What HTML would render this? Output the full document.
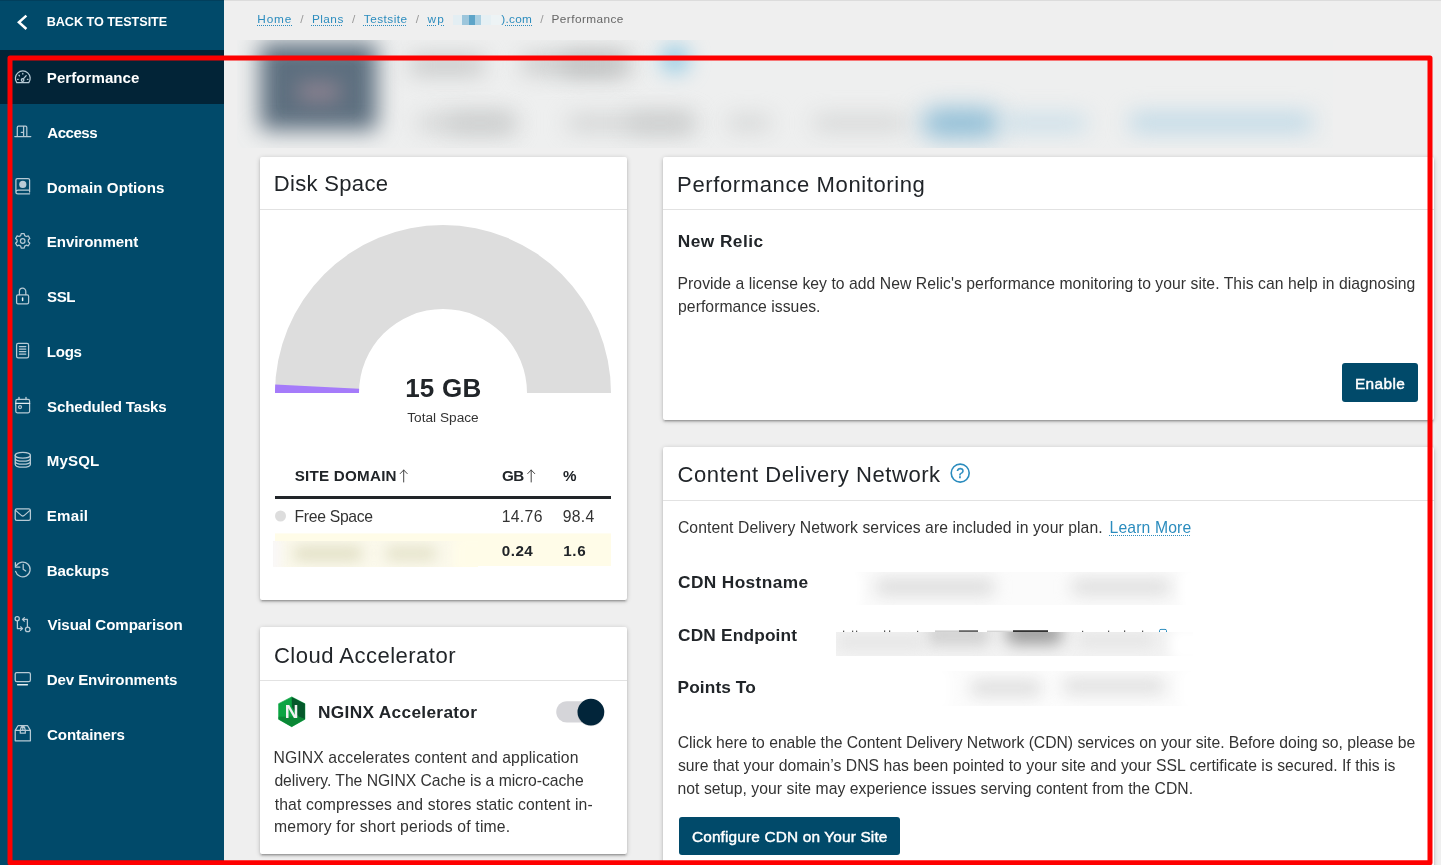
<!DOCTYPE html>
<html lang="en"><head><meta charset="utf-8"><title>Performance</title>
<style>
*{box-sizing:border-box}
html,body{margin:0;padding:0}
body{width:1441px;height:865px;overflow:hidden;position:relative;background:#efefef;font-family:"Liberation Sans",sans-serif}
.abs{position:absolute}
#main-top{position:absolute;left:224px;top:0;width:1217px;height:1px;background:#dcdcdc}
#sidebar{position:absolute;left:0;top:0;width:224px;height:865px;background:#014a6a}
#sidebar .topline{position:absolute;left:0;top:0;width:224px;height:1px;background:#023f5c}
#sidebar .active{position:absolute;left:0;top:50px;width:224px;height:54px;background:#022437}
.ico{position:absolute;left:0;top:0;width:224px;height:865px;overflow:visible}
.card{position:absolute;background:#fff;border-radius:2px;box-shadow:0 2px 2px 0 rgba(0,0,0,.14),0 3px 1px -2px rgba(0,0,0,.12),0 1px 5px 0 rgba(0,0,0,.2)}
.hr{position:absolute;left:0;width:100%;height:1px;background:#e2e2e2}
.btn{position:absolute;background:#014a6a;border-radius:3px}
#texts{position:absolute;left:0;top:0;width:1441px;height:865px;will-change:transform}
.t{position:absolute;white-space:nowrap;line-height:1;font-family:"Liberation Sans",sans-serif}
.lk{text-decoration:underline dotted;text-decoration-thickness:1px;text-underline-offset:2px}
#redbox{position:absolute;left:0;top:0;width:1441px;height:865px}
#hdr{position:absolute;left:236.5px;top:40px;width:1096px;height:107.5px;overflow:hidden;background:#eeefef}
#hdr i{position:absolute;display:block;border-radius:6px}
.blurbox{position:absolute;overflow:hidden;background:#fff}
.blurbox i{position:absolute;display:block;border-radius:8px;filter:blur(6px)}

</style></head><body>
<div id="main-top"></div>

<!-- blurred site header -->
<div id="hdr">
  <i style="left:23.0px;top:3.0px;width:117.0px;height:87.0px;background:#5d6f7f;filter:blur(11px);border-radius:4px"></i>
  <i style="left:61.5px;top:42.0px;width:42.0px;height:20.0px;background:#8c8290;filter:blur(10px);border-radius:4px"></i>
  <i style="left:173.5px;top:16.0px;width:74.0px;height:18.0px;background:#c3c5c5;filter:blur(11px);border-radius:4px"></i>
  <i style="left:285.5px;top:15.0px;width:110.0px;height:18.0px;background:#c5c7c7;filter:blur(11px);border-radius:4px"></i>
  <i style="left:325.5px;top:14.0px;width:60.0px;height:20.0px;background:#c0c2c2;filter:blur(11px);border-radius:4px"></i>
  <i style="left:426.5px;top:7.0px;width:24.0px;height:24.0px;background:#6fbcdf;filter:blur(11px);border-radius:12px"></i>
  <i style="left:181.5px;top:76.0px;width:98.0px;height:14.0px;background:#cdcfcf;filter:blur(11px);border-radius:4px"></i>
  <i style="left:211.5px;top:75.0px;width:64.0px;height:16.0px;background:#c9cbcb;filter:blur(11px);border-radius:4px"></i>
  <i style="left:331.5px;top:76.0px;width:126.0px;height:14.0px;background:#cdcfcf;filter:blur(11px);border-radius:4px"></i>
  <i style="left:391.5px;top:75.0px;width:64.0px;height:16.0px;background:#c9cbcb;filter:blur(11px);border-radius:4px"></i>
  <i style="left:491.5px;top:77.0px;width:42.0px;height:12.0px;background:#cdcfcf;filter:blur(11px);border-radius:4px"></i>
  <i style="left:577.5px;top:77.0px;width:92.0px;height:12.0px;background:#cdcfcf;filter:blur(11px);border-radius:4px"></i>
  <i style="left:685.5px;top:69.0px;width:78.0px;height:28.0px;background:#8abbd5;filter:blur(12px);border-radius:14px"></i>
  <i style="left:767.5px;top:76.0px;width:82.0px;height:14.0px;background:#c2dbe8;filter:blur(11px);border-radius:4px"></i>
  <i style="left:893.5px;top:73.0px;width:182.0px;height:19.0px;background:#bdd8e6;filter:blur(11px);border-radius:4px"></i>
</div>

<!-- sidebar -->
<div id="sidebar">
  <div class="topline"></div>
  <div class="active"></div>
  <svg class="ico" viewBox="0 0 224 865" fill="none" stroke="#fff" stroke-linecap="round" stroke-linejoin="round">
    <path d="M26.4 15.6 L18.9 22.3 L26.4 29" stroke-width="2.5" stroke-linecap="butt" stroke-linejoin="miter"/>
    <g stroke="#b7cad5" stroke-width="1.25" id="icons">
      <!-- performance gauge -->
      <path d="M16.8 82.7 H28.8 A7.4 7.4 0 1 0 16.8 82.7 Z"/>
      <path d="M23.1 79.2 L26.2 75.6"/><circle cx="22.6" cy="80" r="1.3"/>
      <path d="M22.8 73.5v.6M19 75.3l.4.4M17.6 79.3h.6M27.4 79.3h.6" stroke-width="1.3"/>
      <!-- access door -->
      <path d="M14.8 136.6 H30.8 M17.3 136.4 V127.4 Q17.3 126.2 18.5 126.2 H25.6 Q26.8 126.2 26.8 127.4 V136.4 M23.6 126.4 V136.4 M21.3 132.4 H23.4"/>
      <!-- domain -->
      <path d="M17.4 178.6 H28.1 Q29.6 178.6 29.6 180.1 V192 M29.6 193.8 H18 Q15.9 193.8 15.9 191.9 V180.1 Q15.9 178.6 17.4 178.6 M16.2 191.2 Q16.6 190 18 190 H29.6"/>
      <circle cx="22.8" cy="184.4" r="3.6" fill="#b9cbd6" stroke="none"/>
      <!-- environment gear -->
      <path d="M21.2 233.6h3l.5 2 1.6.9 2-.6 1.5 2.6-1.5 1.4v1.9l1.5 1.4-1.5 2.6-2-.6-1.6.9-.5 2h-3l-.5-2-1.6-.9-2 .6-1.5-2.6 1.5-1.4v-1.9l-1.5-1.4 1.5-2.6 2 .6 1.6-.9z"/>
      <circle cx="22.7" cy="241" r="2.3"/>
      <!-- ssl lock -->
      <rect x="16.6" y="294.8" width="12" height="9" rx="1.4"/>
      <path d="M19.4 294.6 V291.4 A3.2 3.2 0 0 1 25.8 291.4 V294.6"/>
      <path d="M22.6 297.9 V300.6" stroke="#eef3f6" stroke-width="1.5"/>
      <!-- logs -->
      <rect x="16.6" y="343.4" width="12" height="14.4" rx="1.6"/>
      <path d="M19.4 346.5h6.4M19.4 349h6.4M19.4 351.6h6.4M19.4 354.1h6.4"/>
      <!-- scheduled -->
      <rect x="15.8" y="399.4" width="13.8" height="13.4" rx="1.5"/>
      <path d="M15.8 403.4 H29.6" stroke="#e4ecf0" stroke-width="1.3"/><path d="M19 397.4 V399.6 M26 397.4 V399.6" stroke-width="1.4"/>
      <circle cx="20" cy="407.1" r="1.5"/>
      <!-- mysql -->
      <ellipse cx="22.8" cy="455.2" rx="7.6" ry="2.9"/>
      <path d="M15.2 455.2 V464.2 C15.2 468.2 30.4 468.2 30.4 464.2 V455.2 M15.2 458.2 C15.2 462.2 30.4 462.2 30.4 458.2 M15.2 461.2 C15.2 465.2 30.4 465.2 30.4 461.2"/>
      <!-- email -->
      <rect x="15.2" y="508.8" width="15.2" height="11.6" rx="1.6"/>
      <path d="M15.6 510.4 L21.6 515.6 Q22.8 516.5 24 515.6 L30 510.4"/>
      <!-- backups -->
      <path d="M16.4 565.6 A7.4 7.4 0 1 1 15.6 571.4"/>
      <path d="M15.4 562.6 V567.2 H19.8" /><path d="M23.2 564.4 V569.2 L25.8 571"/>
      <!-- visual comparison -->
      <circle cx="17.2" cy="618.7" r="2.1"/><circle cx="27.7" cy="629.4" r="2.3"/>
      <path d="M17.4 621.4 V628.6 H22 M20.6 626.8 L22.6 628.6 L20.6 630.4"/>
      <path d="M27.4 626.6 V619.4 H23.2 M24.4 617.6 L22.4 619.4 L24.4 621.2"/>
      <!-- dev env -->
      <rect x="15.2" y="672.5" width="15.2" height="9.2" rx="1.6"/>
      <path d="M17.6 684.7 H27.4" stroke="#e6eef2" stroke-width="1.5"/>
      <!-- containers -->
      <path d="M15.2 730.4 L18 725.7 H27.6 L30.4 730.4 V740.8 H15.2 Z M15.2 730.4 H30.4 M20.3 730.2 Q20.6 727 22.8 725.9 Q25 727 25.3 730.2 M20.3 730.4 V733.2 H25.3 V730.4 M22.8 726 V730"/>
    </g>
  </svg>
</div>

<!-- Disk Space card -->
<div class="card" style="left:259.5px;top:157px;width:367.5px;height:443px">
  <div class="hr" style="top:52px"></div>
</div>
<svg class="abs" style="left:259px;top:210px;width:368px;height:390px" viewBox="259 210 368 390">
  <path d="M275 393 A168 168 0 0 1 611 393 L527 393 A84 84 0 0 0 359 393 Z" fill="#dddddd"/>
  <path d="M275 393 L275.21 384.56 A168 168 0 0 0 275 393 Z M275 393 L359 393 L359.1 388.78 L275.21 384.56 Z" fill="#a57bfa"/>
  <rect x="275" y="496" width="336" height="3" fill="#212529"/>
  <circle cx="280.5" cy="516" r="5.5" fill="#dddddd"/>
  <rect x="275" y="533.4" width="336" height="32.6" fill="#fffce8"/>
  <g stroke="#444" stroke-width="1" fill="none" stroke-linecap="round" stroke-linejoin="round">
    <path d="M403.7 482 V470 M400.2 473.6 L403.7 470 L407.2 473.6"/>
    <path d="M531.2 482 V470 M527.7 473.6 L531.2 470 L534.7 473.6"/>
  </g>
</svg>
<div class="blurbox" style="left:273px;top:541px;width:205px;height:26px;background:#fbf9ec">
  <i style="left:20px;top:5px;width:70px;height:15px;background:#e2e0c6;filter:blur(7px)"></i>
  <i style="left:112px;top:5px;width:52px;height:15px;background:#e5e3cb;filter:blur(7px)"></i>
  <i style="left:-16px;top:-6px;width:24px;height:40px;background:#f9f7f7;filter:blur(5px)"></i>
  <i style="left:180px;top:-6px;width:44px;height:40px;background:#fffce8;filter:blur(6px)"></i>
</div>

<!-- Cloud Accelerator card -->
<div class="card" style="left:259.5px;top:627px;width:367.5px;height:226.5px">
  <div class="hr" style="top:53px"></div>
</div>
<svg class="abs" style="left:259px;top:690px;width:368px;height:50px;will-change:transform" viewBox="259 690 368 50">
  <defs>
    <linearGradient id="ng" x1="0" y1="0" x2="1" y2="1"><stop offset="0" stop-color="#12a845"/><stop offset="1" stop-color="#067a2e"/></linearGradient>
  </defs>
  <path d="M291.7 696.9 L304.9 703.7 V719.3 L291.7 726.7 L278.6 719.3 V703.7 Z" fill="#0ba442" stroke="#0ba442" stroke-width=".6" stroke-linejoin="round"/>
  <path d="M291.7 696.9 L304.9 703.7 V719.3 L298.4 716.6 L291.9 707 Z" fill="#05592b"/>
  <path d="M278.6 716.8 L298.4 716.6 L304.9 719.3 L291.7 726.7 L278.6 719.3 Z" fill="#0a8735"/>
  <text x="291.7" y="718.1" text-anchor="middle" font-family="Liberation Sans, sans-serif" font-weight="700" font-size="19" fill="#f1f1f1">N</text>
  <rect x="556.25" y="701.25" width="47.5" height="21.25" rx="10.6" fill="#d5d5d9"/>
  <circle cx="590.9" cy="712.6" r="13.6" fill="#000" opacity=".12"/>
  <circle cx="590.9" cy="712.1" r="13.35" fill="#02253a"/>
</svg>

<!-- Performance Monitoring card -->
<div class="card" style="left:663px;top:157px;width:771px;height:262.5px">
  <div class="hr" style="top:52px"></div>
</div>
<div class="btn" style="left:1342px;top:363px;width:76px;height:38.5px"></div>

<!-- CDN card -->
<div class="card" style="left:663px;top:447px;width:771px;height:440px">
  <div class="hr" style="top:52.5px"></div>
</div>
<svg class="abs" style="left:945px;top:460px;width:30px;height:26px;will-change:transform" viewBox="945 460 30 26">
  <circle cx="960.2" cy="473.1" r="9" fill="none" stroke="#2b8cbe" stroke-width="1.6"/>
  <text x="960.2" y="478.2" text-anchor="middle" font-family="Liberation Sans, sans-serif" font-size="14" fill="#2b8cbe" stroke="#2b8cbe" stroke-width=".35">?</text>
</svg>
<div class="blurbox" style="left:855px;top:572px;width:338px;height:33px;background:#fbfbfb">
  <i style="left:20px;top:6px;width:120px;height:18px;background:#dedede;filter:blur(8px)"></i>
  <i style="left:216px;top:6px;width:100px;height:18px;background:#e0e0e0;filter:blur(8px)"></i>
  <i style="left:-20px;top:-4px;width:26px;height:44px;background:#fff;filter:blur(5px)"></i>
  <i style="left:326px;top:-4px;width:30px;height:44px;background:#fff;filter:blur(5px)"></i>
</div>
<!-- endpoint: tips of text + pixelated redaction peeking above blur -->
<svg class="abs" style="left:836px;top:628px;width:360px;height:6px" viewBox="836 628 360 6">
  <g fill="#555">
    <rect x="843" y="630.6" width="1.2" height="1.6"/><rect x="852" y="630.6" width="1.2" height="1.6"/><rect x="856" y="630.6" width="1.2" height="1.6"/>
    <rect x="884" y="630.4" width="1.2" height="1.8"/><rect x="889" y="630.4" width="1.2" height="1.8"/><rect x="917" y="630.8" width="1.2" height="1.4"/>
    <rect x="1082" y="630.8" width="1.2" height="1.4"/><rect x="1108" y="630.6" width="1.2" height="1.6"/><rect x="1124" y="630.4" width="1.2" height="1.8"/><rect x="1142" y="630.6" width="1.2" height="1.6"/>
  </g>
  <rect x="935" y="630.4" width="24" height="2" fill="#cfcfcf"/><rect x="959" y="630.2" width="19" height="2" fill="#666"/>
  <rect x="987" y="630.6" width="26" height="2" fill="#d5d5d5"/><rect x="1013" y="630.2" width="35" height="2" fill="#333"/>
  <path d="M1159.5 632.5 V630.6 Q1159.5 629.4 1161 629.4 H1165 Q1166.5 629.4 1166.5 630.6 V632.5" fill="none" stroke="#2b8cbe" stroke-width="1"/>
</svg>
<div class="blurbox" style="left:836px;top:632px;width:357px;height:23.5px;background:#f3f3f3">
  <i style="left:90px;top:-8px;width:64px;height:22px;background:#d2d2d2;filter:blur(7px)"></i>
  <i style="left:170px;top:-10px;width:56px;height:22px;background:#9a9a9a;filter:blur(8px)"></i>
  <i style="left:0px;top:2px;width:90px;height:16px;background:#e6e6e6;filter:blur(7px)"></i>
  <i style="left:240px;top:0px;width:80px;height:16px;background:#e6e6e6;filter:blur(7px)"></i>
  <i style="left:334px;top:-4px;width:40px;height:34px;background:#fff;filter:blur(6px)"></i>
</div>
<div class="blurbox" style="left:942px;top:671px;width:251px;height:35px;background:#fcfcfc">
  <i style="left:28px;top:8px;width:72px;height:18px;background:#e0e0e0;filter:blur(8px)"></i>
  <i style="left:120px;top:6px;width:104px;height:18px;background:#e2e2e2;filter:blur(8px)"></i>
  <i style="left:-22px;top:-4px;width:30px;height:44px;background:#fff;filter:blur(6px)"></i>
  <i style="left:238px;top:-4px;width:30px;height:44px;background:#fff;filter:blur(6px)"></i>
</div>
<div class="btn" style="left:678.6px;top:817.2px;width:221.8px;height:37.4px"></div>

<!-- breadcrumb pixelated redaction -->
<svg class="abs" style="left:448px;top:12px;width:56px;height:14px" viewBox="448 12 56 14">
  <rect x="453" y="15" width="9" height="10" fill="#e3eef3"/><rect x="462" y="15" width="7" height="10" fill="#9cc6dc"/>
  <rect x="469" y="15" width="6" height="10" fill="#5da4c8"/><rect x="475" y="15" width="6" height="10" fill="#a9cfe2"/>
  <rect x="481" y="15" width="10" height="10" fill="#e6f0f4"/><rect x="491" y="15" width="10" height="10" fill="#edf3f5"/>
</svg>

<div id="texts">
<span class="t " style="left:46.71px;top:16.00px;font-size:12.61px;font-weight:700;color:#fff;letter-spacing:-0.031px;">BACK TO TESTSITE</span>
<span class="t " style="left:46.80px;top:70.01px;font-size:15.09px;font-weight:700;color:#fff;letter-spacing:0.044px;">Performance</span>
<span class="t " style="left:47.26px;top:125.01px;font-size:15.09px;font-weight:700;color:#fff;letter-spacing:-0.493px;">Access</span>
<span class="t " style="left:46.80px;top:180.01px;font-size:15.09px;font-weight:700;color:#fff;letter-spacing:0.083px;">Domain Options</span>
<span class="t " style="left:46.80px;top:234.01px;font-size:15.09px;font-weight:700;color:#fff;letter-spacing:-0.075px;">Environment</span>
<span class="t " style="left:47.09px;top:289.01px;font-size:15.09px;font-weight:700;color:#fff;letter-spacing:-0.496px;">SSL</span>
<span class="t " style="left:46.80px;top:344.01px;font-size:15.09px;font-weight:700;color:#fff;letter-spacing:-0.288px;">Logs</span>
<span class="t " style="left:47.09px;top:399.01px;font-size:15.09px;font-weight:700;color:#fff;letter-spacing:-0.175px;">Scheduled Tasks</span>
<span class="t " style="left:46.80px;top:453.01px;font-size:15.09px;font-weight:700;color:#fff;letter-spacing:0.118px;">MySQL</span>
<span class="t " style="left:46.80px;top:508.01px;font-size:15.09px;font-weight:700;color:#fff;letter-spacing:0.243px;">Email</span>
<span class="t " style="left:46.80px;top:563.01px;font-size:15.09px;font-weight:700;color:#fff;letter-spacing:-0.103px;">Backups</span>
<span class="t " style="left:47.53px;top:617.01px;font-size:15.09px;font-weight:700;color:#fff;letter-spacing:-0.072px;">Visual Comparison</span>
<span class="t " style="left:46.80px;top:672.01px;font-size:15.09px;font-weight:700;color:#fff;letter-spacing:-0.116px;">Dev Environments</span>
<span class="t " style="left:47.07px;top:727.01px;font-size:15.09px;font-weight:700;color:#fff;letter-spacing:-0.111px;">Containers</span>
<span class="t lk" style="left:257.35px;top:14.01px;font-size:11.8px;font-weight:400;color:#2b8cbe;letter-spacing:0.829px;">Home</span>
<span class="t " style="left:300.18px;top:14.01px;font-size:11.8px;font-weight:400;color:#999;letter-spacing:0.000px;">/</span>
<span class="t lk" style="left:311.93px;top:14.01px;font-size:11.8px;font-weight:400;color:#2b8cbe;letter-spacing:0.465px;">Plans</span>
<span class="t " style="left:352.01px;top:14.01px;font-size:11.8px;font-weight:400;color:#999;letter-spacing:0.000px;">/</span>
<span class="t lk" style="left:363.84px;top:14.01px;font-size:11.8px;font-weight:400;color:#2b8cbe;letter-spacing:0.467px;">Testsite</span>
<span class="t " style="left:415.87px;top:14.01px;font-size:11.8px;font-weight:400;color:#999;letter-spacing:0.000px;">/</span>
<span class="t lk" style="left:427.52px;top:14.01px;font-size:11.8px;font-weight:400;color:#2b8cbe;letter-spacing:1.200px;">wp</span>
<span class="t lk" style="left:501.37px;top:14.01px;font-size:11.8px;font-weight:400;color:#2b8cbe;letter-spacing:0.248px;">).com</span>
<span class="t " style="left:540.21px;top:14.01px;font-size:11.8px;font-weight:400;color:#999;letter-spacing:0.000px;">/</span>
<span class="t " style="left:551.57px;top:14.01px;font-size:11.8px;font-weight:400;color:#666;letter-spacing:0.433px;">Performance</span>
<span class="t " style="left:273.85px;top:173.01px;font-size:22.05px;font-weight:400;color:#212529;letter-spacing:0.292px;">Disk Space</span>
<span class="t " style="left:405.16px;top:375.01px;font-size:26.0px;font-weight:700;color:#212529;letter-spacing:0.222px;">15 GB</span>
<span class="t " style="left:407.27px;top:411.00px;font-size:13.66px;font-weight:400;color:#333;letter-spacing:0.005px;">Total Space</span>
<span class="t " style="left:294.67px;top:468.01px;font-size:15.2px;font-weight:700;color:#212529;letter-spacing:0.233px;">SITE DOMAIN</span>
<span class="t " style="left:502.06px;top:468.01px;font-size:15.2px;font-weight:700;color:#212529;letter-spacing:-0.700px;">GB</span>
<span class="t " style="left:562.95px;top:468.01px;font-size:15.2px;font-weight:700;color:#212529;letter-spacing:0.000px;">%</span>
<span class="t " style="left:294.45px;top:509.01px;font-size:15.73px;font-weight:400;color:#333;letter-spacing:-0.287px;">Free Space</span>
<span class="t " style="left:501.69px;top:509.01px;font-size:15.73px;font-weight:400;color:#333;letter-spacing:0.348px;">14.76</span>
<span class="t " style="left:562.78px;top:509.01px;font-size:15.73px;font-weight:400;color:#333;letter-spacing:0.290px;">98.4</span>
<span class="t " style="left:501.83px;top:543.01px;font-size:15.2px;font-weight:700;color:#212529;letter-spacing:0.475px;">0.24</span>
<span class="t " style="left:563.19px;top:543.01px;font-size:15.2px;font-weight:700;color:#212529;letter-spacing:0.706px;">1.6</span>
<span class="t " style="left:273.90px;top:645.01px;font-size:22.05px;font-weight:400;color:#212529;letter-spacing:0.476px;">Cloud Accelerator</span>
<span class="t " style="left:318.06px;top:704.00px;font-size:17.3px;font-weight:700;color:#212529;letter-spacing:0.307px;">NGINX Accelerator</span>
<span class="t " style="left:273.56px;top:750.01px;font-size:15.73px;font-weight:400;color:#333;letter-spacing:0.108px;">NGINX accelerates content and application</span>
<span class="t " style="left:274.38px;top:773.01px;font-size:15.73px;font-weight:400;color:#333;letter-spacing:-0.046px;">delivery. The NGINX Cache is a micro-cache</span>
<span class="t " style="left:274.73px;top:797.01px;font-size:15.73px;font-weight:400;color:#333;letter-spacing:0.138px;">that compresses and stores static content in-</span>
<span class="t " style="left:274.03px;top:819.01px;font-size:15.73px;font-weight:400;color:#333;letter-spacing:0.171px;">memory for short periods of time.</span>
<span class="t " style="left:677.09px;top:174.01px;font-size:22.05px;font-weight:400;color:#212529;letter-spacing:0.597px;">Performance Monitoring</span>
<span class="t " style="left:677.84px;top:233.00px;font-size:17.3px;font-weight:700;color:#212529;letter-spacing:0.443px;">New Relic</span>
<span class="t " style="left:677.56px;top:276.01px;font-size:15.73px;font-weight:400;color:#333;letter-spacing:0.045px;">Provide a license key to add New Relic&#x27;s performance monitoring to your site. This can help in diagnosing</span>
<span class="t " style="left:678.09px;top:299.01px;font-size:15.73px;font-weight:400;color:#333;letter-spacing:0.046px;">performance issues.</span>
<span class="t " style="left:1354.98px;top:376.01px;font-size:15.4px;font-weight:400;color:#fff;letter-spacing:0.381px;-webkit-text-stroke:0.45px #fff;">Enable</span>
<span class="t " style="left:677.60px;top:464.01px;font-size:22.05px;font-weight:400;color:#212529;letter-spacing:0.546px;">Content Delivery Network</span>
<span class="t " style="left:677.95px;top:520.01px;font-size:15.73px;font-weight:400;color:#333;letter-spacing:0.075px;">Content Delivery Network services are included in your plan.</span>
<span class="t lk" style="left:1109.56px;top:520.01px;font-size:15.73px;font-weight:400;color:#2b8cbe;letter-spacing:0.135px;">Learn More</span>
<span class="t " style="left:678.04px;top:574.00px;font-size:17.3px;font-weight:700;color:#212529;letter-spacing:0.379px;">CDN Hostname</span>
<span class="t " style="left:678.04px;top:627.00px;font-size:17.3px;font-weight:700;color:#212529;letter-spacing:0.176px;">CDN Endpoint</span>
<span class="t " style="left:677.59px;top:679.00px;font-size:17.3px;font-weight:700;color:#212529;letter-spacing:0.094px;">Points To</span>
<span class="t " style="left:677.80px;top:735.01px;font-size:15.73px;font-weight:400;color:#333;letter-spacing:-0.025px;">Click here to enable the Content Delivery Network (CDN) services on your site. Before doing so, please be</span>
<span class="t " style="left:677.89px;top:758.01px;font-size:15.73px;font-weight:400;color:#333;letter-spacing:0.019px;">sure that your domain’s DNS has been pointed to your site and your SSL certificate is secured. If this is</span>
<span class="t " style="left:677.57px;top:781.01px;font-size:15.73px;font-weight:400;color:#333;letter-spacing:0.037px;">not setup, your site may experience issues serving content from the CDN.</span>
<span class="t " style="left:691.92px;top:829.01px;font-size:15.4px;font-weight:400;color:#fff;letter-spacing:0.154px;-webkit-text-stroke:0.45px #fff;">Configure CDN on Your Site</span>
</div>
<svg id="redbox" viewBox="0 0 1441 865" width="1441" height="865"><rect x="10" y="58" width="1420" height="804.7" fill="none" stroke="#fe0000" stroke-width="5" stroke-linejoin="round"/></svg>
</body></html>
